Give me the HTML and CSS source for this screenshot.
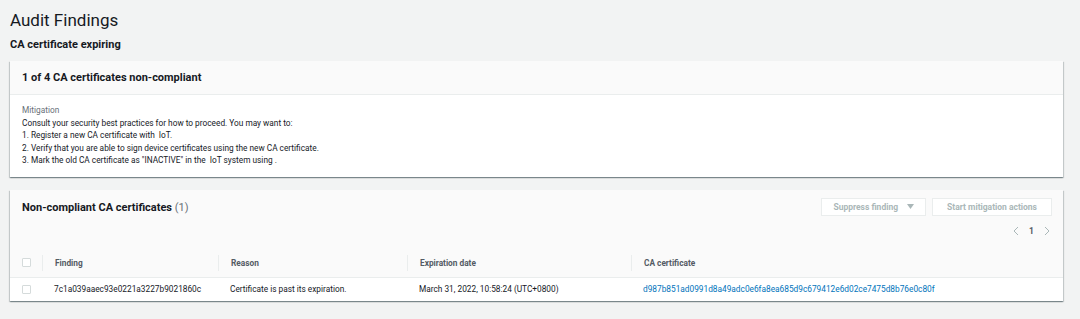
FILE: index.html
```html
<!DOCTYPE html>
<html>
<head>
<title>Audit Findings</title>
<link rel="stylesheet" href="styles.css">
</head>
<body>
<div class="page">
  <h1 class="page-title">Audit Findings</h1>
  <h2 class="check-name">CA certificate expiring</h2>

  <div class="card">
    <div class="card-header">
      <h3>1 of 4 CA certificates non-compliant</h3>
    </div>
    <div class="card-body">
      <div class="label">Mitigation</div>
      <div class="mitigation">
        Consult your security best practices for how to proceed. You may want to:<br>
        1. Register a new CA certificate with &nbsp;IoT.<br>
        2. Verify that you are able to sign device certificates using the new CA certificate.<br>
        3. Mark the old CA certificate as "INACTIVE" in the &nbsp;IoT system using .
      </div>
    </div>
  </div>

  <div class="card">
    <div class="table-header">
      <h3>Non-compliant CA certificates <span class="count">(1)</span></h3>
      <div class="tools">
        <div class="actions">
          <button class="btn">Suppress finding
            <svg class="caret" width="7" height="5" viewBox="0 0 7 5"><path d="M0 0h7L3.5 5z" fill="#aab7b8"/></svg>
          </button>
          <button class="btn btn-wide">Start mitigation actions</button>
        </div>
        <div class="pager">
          <svg width="6" height="10" viewBox="0 0 6 10"><polyline points="5,1 1,5 5,9" fill="none" stroke="#aab7b8" stroke-width="1"/></svg>
          <span class="page-num">1</span>
          <svg width="6" height="10" viewBox="0 0 6 10"><polyline points="1,1 5,5 1,9" fill="none" stroke="#aab7b8" stroke-width="1"/></svg>
        </div>
      </div>
    </div>
    <table class="findings">
      <colgroup>
        <col class="c-check"><col class="c-finding"><col class="c-reason"><col class="c-date"><col>
      </colgroup>
      <thead>
        <tr>
          <th><span class="checkbox"></span></th>
          <th><span class="th-text">Finding</span></th>
          <th><span class="th-text">Reason</span></th>
          <th><span class="th-text">Expiration date</span></th>
          <th><span class="th-text">CA certificate</span></th>
        </tr>
      </thead>
      <tbody>
        <tr>
          <td><span class="checkbox"></span></td>
          <td>7c1a039aaec93e0221a3227b9021860c</td>
          <td>Certificate is past its expiration.</td>
          <td>March 31, 2022, 10:58:24 (UTC+0800)</td>
          <td><a href="#">d987b851ad0991d8a49adc0e6fa8ea685d9c679412e6d02ce7475d8b76e0c80f</a></td>
        </tr>
      </tbody>
    </table>
  </div>
</div>
</body>
</html>
```

FILE: styles.css
```css
body {
  margin: 0;
  background: #f2f3f3;
  font-family: Roboto, "Liberation Sans", sans-serif;
  color: #16191f;
}
.page {
  width: 1053px;
  padding: 9px 0 0 10px;
}
h1.page-title {
  margin: 0;
  font-size: 17px;
  font-weight: 400;
  line-height: 22px;
}
h2.check-name {
  margin: 6px 0 8px 0;
  font-size: 11px;
  font-weight: 700;
  line-height: 16px;
}
.card {
  background: #fff;
  margin-bottom: 13px;
  box-shadow: 0 1px 1px 0 rgba(0, 28, 36, 0.3), 1px 1px 1px 0 rgba(0, 28, 36, 0.15), -1px 1px 1px 0 rgba(0, 28, 36, 0.15);
}
.card h3 {
  margin: 0;
  font-size: 11px;
  font-weight: 700;
  line-height: 16px;
}
.card-header {
  background: #fafafa;
  border-bottom: 1px solid #eaeded;
  padding: 9px 12px 8px 12px;
}
.card-body {
  padding: 9px 12px 10px 12px;
  font-size: 8.3px;
  line-height: 12.6px;
}
.label {
  color: #687078;
}
.table-header {
  background: #fafafa;
  display: flex;
  justify-content: space-between;
  padding: 8px 11px 0 12px;
  height: 51px;
}
.table-header h3 {
  margin-top: 2px;
}
.count {
  color: #687078;
  font-weight: 400;
}
.tools {
  display: flex;
  flex-direction: column;
  align-items: flex-end;
}
.actions {
  display: flex;
  gap: 6px;
}
.btn {
  height: 18px;
  background: #fff;
  border: 1px solid #eaeded;
  color: #aab7b8;
  font-family: inherit;
  font-size: 8.5px;
  font-weight: 700;
  padding: 0 11px;
  display: flex;
  align-items: center;
  gap: 9px;
}
.btn-wide {
  padding: 0 14px;
}
.pager {
  display: flex;
  align-items: center;
  gap: 10px;
  margin-top: 10px;
  padding-right: 2px;
}
.page-num {
  font-size: 8.5px;
  font-weight: 700;
  color: #545b64;
}
table.findings {
  width: 100%;
  border-collapse: collapse;
  table-layout: fixed;
  font-size: 8.3px;
}
col.c-check { width: 32px; }
col.c-finding { width: 176px; }
col.c-reason { width: 189px; }
col.c-date { width: 224px; }
.findings th {
  background: #fafafa;
  height: 28px;
  padding: 0;
  text-align: left;
  font-weight: 700;
  color: #545b64;
  border-bottom: 1px solid #eaeded;
}
.findings th .th-text {
  display: block;
  border-left: 1px solid #eaeded;
  padding-left: 12px;
  line-height: 16px;
}
.findings th:first-child {
  padding-left: 12px;
}
.findings td {
  height: 23px;
  padding: 0 0 0 12px;
  white-space: nowrap;
  overflow: hidden;
}
.checkbox {
  display: block;
  width: 7px;
  height: 7px;
  border: 1px solid #d5dbdb;
  border-radius: 1px;
  background: #fff;
}
a {
  color: #0073bb;
  text-decoration: none;
}
```
